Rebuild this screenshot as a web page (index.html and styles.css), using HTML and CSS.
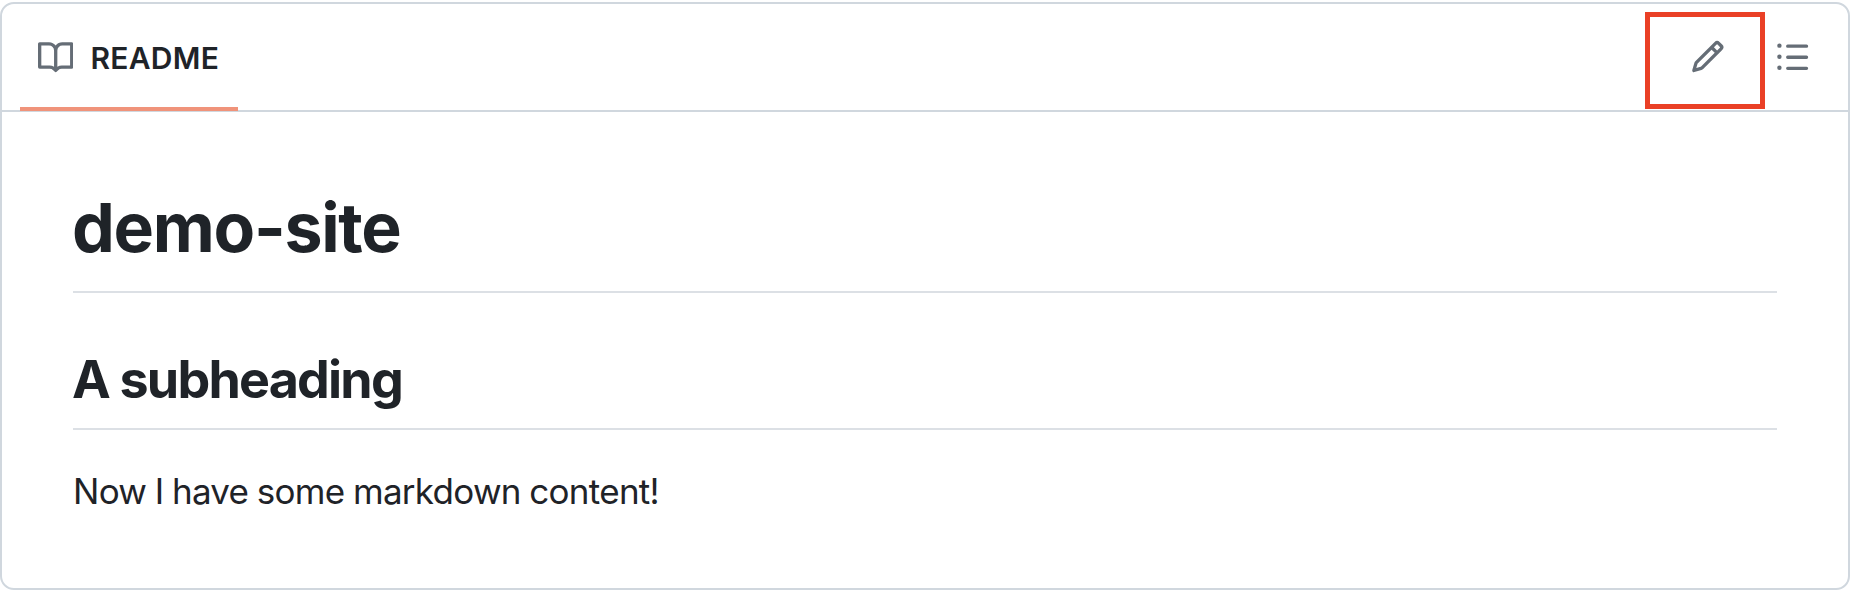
FILE: index.html
```html
<!DOCTYPE html>
<html lang="en">
<head>
<meta charset="utf-8">
<title>demo-site</title>
<link rel="stylesheet" href="styles.css">
</head>
<body>
<section class="box">
  <header class="bar">
    <a class="tab">
      <svg class="icon" viewBox="0 0 16 16"><path d="M0 1.75A.75.75 0 0 1 .75 1h4.253c1.227 0 2.317.59 3 1.501A3.743 3.743 0 0 1 11.006 1h4.245a.75.75 0 0 1 .75.75v10.5a.75.75 0 0 1-.75.75h-4.507a2.25 2.25 0 0 0-1.591.659l-.622.621a.75.75 0 0 1-1.06 0l-.622-.621A2.25 2.25 0 0 0 5.258 13H.75a.75.75 0 0 1-.75-.75Zm7.251 10.324.004-5.073-.002-2.253A2.25 2.25 0 0 0 5.003 2.5H1.5v9h3.757a3.75 3.75 0 0 1 1.994.574ZM8.755 4.75l-.004 7.322a3.752 3.752 0 0 1 1.992-.572H14.5v-9h-3.495a2.25 2.25 0 0 0-2.25 2.25Z"/></svg>
      <span class="tab-label">README</span>
    </a>
    <div class="actions">
      <span class="edit"><svg class="icon" viewBox="0 0 16 16"><path d="M11.013 1.427a1.75 1.75 0 0 1 2.474 0l1.086 1.086a1.75 1.75 0 0 1 0 2.474l-8.61 8.61c-.21.21-.47.364-.756.445l-3.251.93a.75.75 0 0 1-.927-.928l.929-3.25c.081-.286.235-.547.445-.758l8.61-8.61Zm.176 4.823L9.75 4.81l-6.286 6.287a.253.253 0 0 0-.064.108l-.558 1.953 1.953-.558a.253.253 0 0 0 .108-.064Zm1.238-3.763a.25.25 0 0 0-.354 0L10.811 3.75l1.439 1.44 1.263-1.263a.25.25 0 0 0 0-.354Z"/></svg></span>
      <svg class="icon" viewBox="0 0 16 16"><path d="M5.75 2.5h8.5a.75.75 0 0 1 0 1.5h-8.5a.75.75 0 0 1 0-1.5Zm0 5h8.5a.75.75 0 0 1 0 1.5h-8.5a.75.75 0 0 1 0-1.5Zm0 5h8.5a.75.75 0 0 1 0 1.5h-8.5a.75.75 0 0 1 0-1.5ZM2 14a1 1 0 1 1 0-2 1 1 0 0 1 0 2Zm1-6a1 1 0 1 1-2 0 1 1 0 0 1 2 0ZM2 4a1 1 0 1 1 0-2 1 1 0 0 1 0 2Z"/></svg>
    </div>
  </header>
  <article class="content">
    <h1 class="title"><span>demo-site</span></h1>
    <h2 class="subtitle"><span>A subheading</span></h2>
    <p class="text"><span>Now I have some markdown content!</span></p>
  </article>
</section>
</body>
</html>
```
FILE: styles.css
```css
* { box-sizing: border-box; }
body {
  margin: 0;
  padding-top: 2px;
  background: #fff;
  color: #1f2328;
  font-family: Inter, "Liberation Sans", sans-serif;
}
.box {
  width: 1850px;
  height: 588px;
  border: 2px solid #d0d7de;
  border-radius: 14px;
}
.bar {
  display: flex;
  justify-content: space-between;
  height: 108px;
  padding: 0 38px 0 18px;
  border-bottom: 2px solid #d0d7de;
}
.icon {
  display: block;
  flex: none;
  width: 35.4px;
  height: 35.4px;
  fill: #656d76;
}
.tab {
  display: flex;
  align-items: center;
  gap: 17px;
  width: 218px;
  height: 107px;
  padding: 0 0 0 18px;
  border-bottom: 4px solid #f0937a;
}
.tab .icon { margin-top: 4px; }
.tab-label {
  margin-top: 4px;
  font-size: 30px;
  line-height: 40px;
  font-weight: 600;
  letter-spacing: 0.3px;
}
.actions {
  display: flex;
  align-items: center;
  gap: 10px;
}
.edit {
  display: flex;
  align-items: center;
  justify-content: center;
  width: 120px;
  height: 97px;
  border: 5px solid #ea4026;
  margin-top: 7px;
}
.edit .icon { margin: -8px 0 0 7px; }
.content { padding: 70px 71px 0; }
.title, .subtitle {
  margin: 0;
  font-weight: 650;
  border-bottom: 2px solid #dce0e5;
}
.title {
  height: 111px;
  font-size: 68px;
  line-height: 90px;
  letter-spacing: -1.3px;
  text-indent: -1px;
}
.subtitle {
  height: 89px;
  margin-top: 48px;
  font-size: 52px;
  line-height: 78px;
  letter-spacing: -1.8px;
  text-indent: -1px;
}
.text {
  margin: 34px 0 0;
  font-size: 35px;
  line-height: 54px;
  letter-spacing: -0.72px;
  word-spacing: -0.6px;
}
```
